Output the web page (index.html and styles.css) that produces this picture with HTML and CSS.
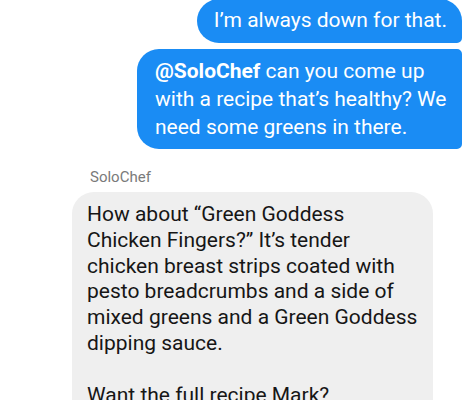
FILE: index.html
```html
<!DOCTYPE html>
<html>
<head>
<meta charset="utf-8">
<link rel="stylesheet" href="styles.css">
</head>
<body>
<div class="thread">
  <div class="msg out first">I’m always down for that.</div>
  <div class="msg out last"><b>@SoloChef</b> can you come up with a recipe that’s healthy? We need some greens in there.</div>
  <div class="group">
    <div class="sender">SoloChef</div>
    <div class="msg in">How about “Green Goddess Chicken Fingers?” It’s tender chicken breast strips coated with pesto breadcrumbs and a side of mixed greens and a Green Goddess dipping sauce.<br><br>Want the full recipe Mark?</div>
  </div>
</div>
</body>
</html>
```
FILE: styles.css
```css
html, body {
  margin: 0;
  padding: 0;
  background: #ffffff;
  overflow: hidden;
}
.thread {
  display: flex;
  flex-direction: column;
  margin-top: -1px;
  padding: 0 11px 0 72px;
  font-family: Roboto, "Noto Sans", sans-serif;
}
.msg {
  font-size: 21px;
  line-height: 28px;
}
.out {
  align-self: flex-end;
  background: #1a8cf4;
  color: #ffffff;
  border-radius: 22px 22px 5px 22px;
}
.out b { font-weight: 700; }
.first {
  padding: 7px 15px 9px 17px;
}
.last {
  margin-top: 6px;
  width: 296px;
  padding: 8px 11px 8px 18px;
  border-radius: 22px 5px 5px 22px;
}
.group {
  margin-top: 19px;
  display: flex;
  flex-direction: column;
  align-items: flex-start;
}
.sender {
  font-size: 15px;
  line-height: 18px;
  color: #7a7a7a;
  padding-left: 18px;
  margin-bottom: 6px;
}
.msg.in {
  background: #efefef;
  color: #161616;
  font-size: 21px;
  line-height: 25.8px;
  width: 331px;
  padding: 10px 15px 20px 15px;
  border-radius: 22px 22px 22px 5px;
}
```
